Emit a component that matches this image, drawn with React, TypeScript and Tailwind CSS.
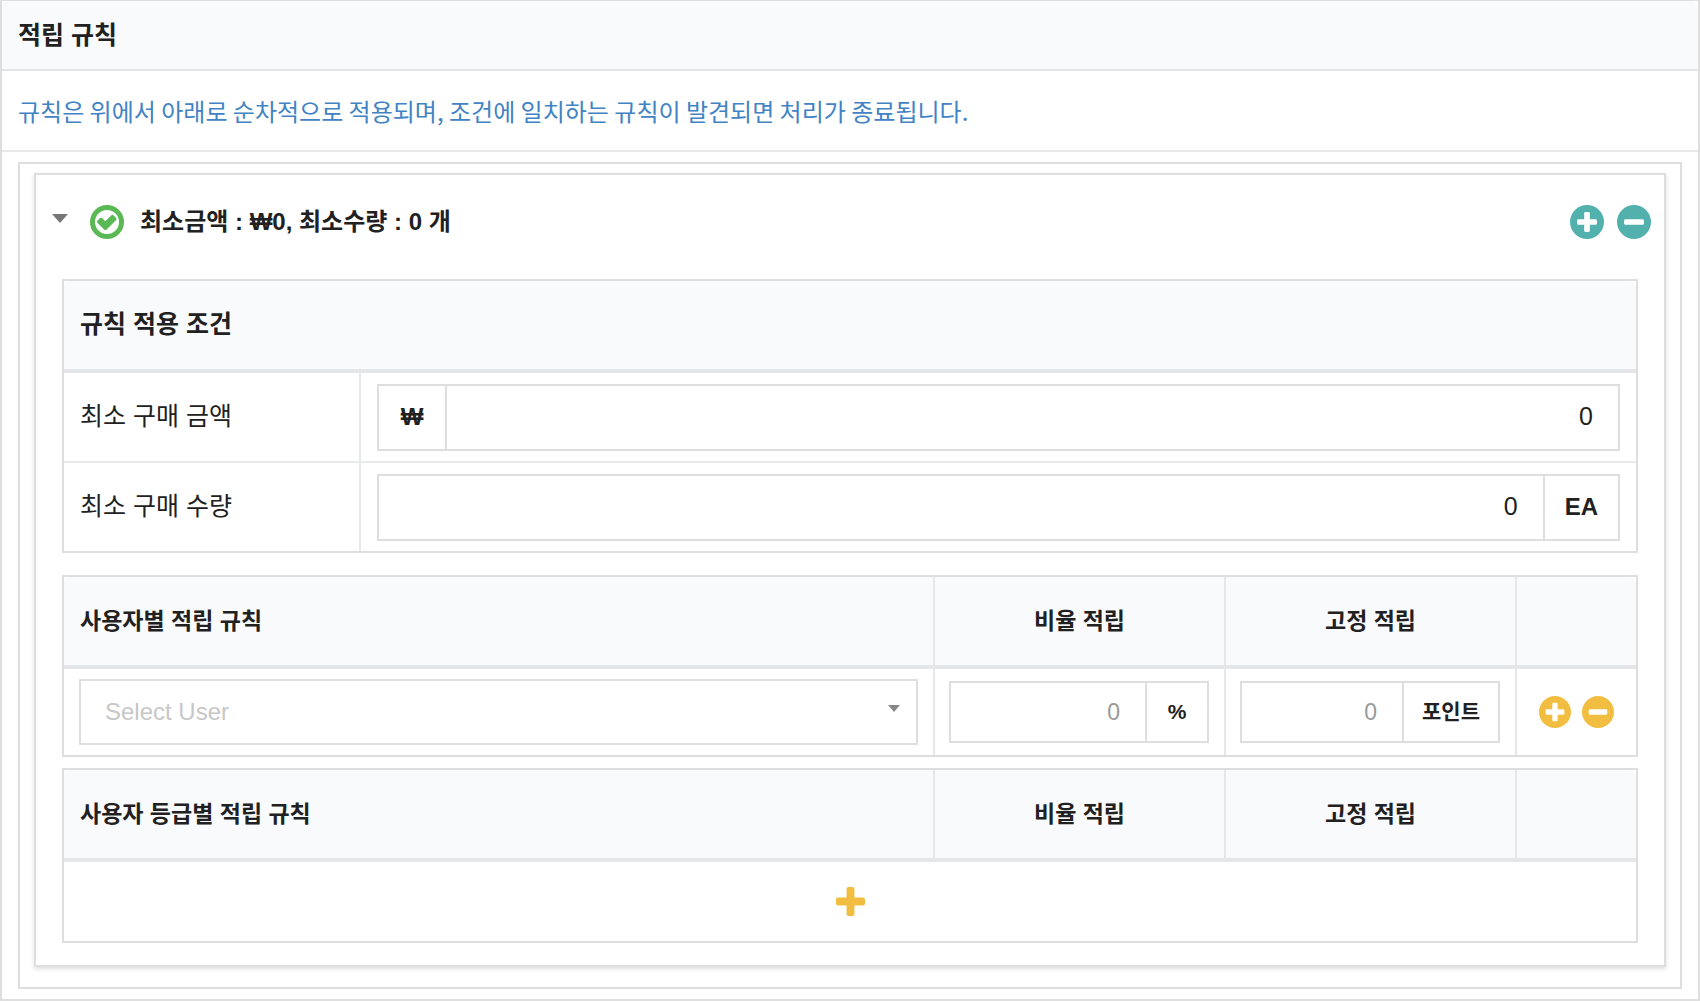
import { useState } from "react";

const frame = "border-2 border-[#dededf]";
const headCell = "bg-[#f9fafb] border-b-4 border-[#e5e6e7] h-[92px] px-4";
const columnLine = "border-l-2 border-l-[#e6e7e8]";

type IconProps = { className?: string };

function PlusCircleIcon({ className = "" }: IconProps) {
  return (
    <svg viewBox="0 0 1536 1536" className={`fill-current ${className}`}>
      <circle cx="768" cy="768" r="768" />
      <rect x="320" y="640" width="896" height="256" rx="64" className="fill-white" />
      <rect x="640" y="320" width="256" height="896" rx="64" className="fill-white" />
    </svg>
  );
}

function MinusCircleIcon({ className = "" }: IconProps) {
  return (
    <svg viewBox="0 0 1536 1536" className={`fill-current ${className}`}>
      <circle cx="768" cy="768" r="768" />
      <rect x="320" y="640" width="896" height="256" rx="64" className="fill-white" />
    </svg>
  );
}

function PlusIcon({ className = "" }: IconProps) {
  return (
    <svg viewBox="0 0 1408 1408" className={`fill-current ${className}`}>
      <rect y="512" width="1408" height="384" rx="96" />
      <rect x="512" width="384" height="1408" rx="96" />
    </svg>
  );
}

function CheckCircleIcon({ className = "" }: IconProps) {
  return (
    <svg viewBox="128 128 1536 1536" className={`fill-current ${className}`}>
      <circle cx="896" cy="896" r="656" fill="none" stroke="currentColor" strokeWidth="224" />
      <path d="M1299 813l-422 422q-24 24-57 24t-57-24l-294-294q-24-24-24-57t24-57l102-102q24-24 57-24t57 24l135 135 263-263q24-24 57-24t57 24l102 102q24 24 24 57t-24 57z" />
    </svg>
  );
}

type UnitInputProps = {
  label: string;
  unit: string;
  unitFirst?: boolean;
  small?: boolean;
  placeholder?: string;
  initial?: string;
};

function UnitInput({ label, unit, unitFirst, small, placeholder, initial = "" }: UnitInputProps) {
  const [value, setValue] = useState(initial);

  return (
    <label className={`flex w-full bg-white ${small ? "h-[62px]" : "h-[67px]"} ${unitFirst ? "flex-row-reverse" : ""}`}>
      <input
        aria-label={label}
        value={value}
        placeholder={placeholder}
        onChange={(e) => setValue(e.target.value)}
        className={`min-w-0 flex-1 border-y-2 border-[#dededf] bg-transparent px-[25px] text-right outline-none placeholder:text-[#999] ${
          small ? "text-[23px]" : "text-[25px]"
        } ${unitFirst ? "border-r-2" : "border-l-2"}`}
      />
      <span
        className={`${frame} flex shrink-0 items-center justify-center font-bold ${
          small ? "min-w-16 px-[18px] text-[21px]" : "min-w-[70px] px-5 text-[24px]"
        }`}
      >
        {unit}
      </span>
    </label>
  );
}

function ColumnWidths() {
  return (
    <colgroup>
      <col />
      <col className="w-[291px]" />
      <col className="w-[291px]" />
      <col className="w-[121px]" />
    </colgroup>
  );
}

function RateHead({ title }: { title: string }) {
  return (
    <thead>
      <tr className="text-[23px]">
        <th className={`${headCell} rounded-tl-lg text-left`}>{title}</th>
        <th className={`${headCell} ${columnLine}`}>비율 적립</th>
        <th className={`${headCell} ${columnLine}`}>고정 적립</th>
        <th className={`${headCell} ${columnLine} rounded-tr-lg`} aria-label="관리" />
      </tr>
    </thead>
  );
}

export default function App() {
  const [open, setOpen] = useState(true);

  return (
    <div className="min-h-screen bg-white font-['Liberation_Sans','Noto_Sans_CJK_KR',sans-serif] text-[#212121]">
      <section className="border-2 border-t border-[#dededf]">
        <h1 className="flex h-[70px] items-center rounded-t-lg border-b-2 border-[#e3e4e5] bg-[#f9fafb] px-4 pt-[2px] text-[25px] font-bold">
          적립 규칙
        </h1>
        <p className="flex h-[81px] items-center border-b-2 border-[#e8e9e9] px-4 font-['Noto_Sans_CJK_KR',sans-serif] text-[24px] text-[#4183c4]">
          규칙은 위에서 아래로 순차적으로 적용되며, 조건에 일치하는 규칙이 발견되면 처리가 종료됩니다.
        </p>

        <div className="px-4 py-[10px]">
          <div className={`${frame} px-[14px] pt-[9px] pb-5`}>
            <div className={`${frame} px-[26px] pb-[22px] shadow-[0_2px_4px_rgba(34,36,38,0.15)]`}>
              {/* Rule summary */}
              <div className="-mr-[13px] -ml-3 flex h-[104px] items-center pb-[10px]">
                <button
                  type="button"
                  aria-label="펼치기"
                  aria-expanded={open}
                  onClick={() => setOpen(!open)}
                  className="flex h-10 w-6 items-center pb-2"
                >
                  <svg viewBox="0 0 16 9" className="ml-[2px] h-[9px] w-4 fill-[#777]">
                    <path d="M0 0h16L8 9z" />
                  </svg>
                </button>
                <CheckCircleIcon className="ml-4 size-[34px] text-[#5bb955]" />
                <h2 className="ml-4 flex-1 text-[24px] font-bold">최소금액 : ₩0, 최소수량 : 0 개</h2>
                <div className="flex gap-[13px] text-[#52b1ad]">
                  <button type="button" aria-label="규칙 추가">
                    <PlusCircleIcon className="size-[34px]" />
                  </button>
                  <button type="button" aria-label="규칙 삭제">
                    <MinusCircleIcon className="size-[34px]" />
                  </button>
                </div>
              </div>

              {open && (
                <>
                  <table className={`${frame} w-full table-fixed border-separate border-spacing-0`}>
                    <colgroup>
                      <col className="w-[295px]" />
                      <col />
                    </colgroup>
                    <thead>
                      <tr>
                        <th colSpan={2} className={`${headCell} rounded-t-lg text-left text-[25px]`}>
                          규칙 적용 조건
                        </th>
                      </tr>
                    </thead>
                    <tbody className="text-[25px]">
                      <tr>
                        <th className="h-[90px] border-b-2 border-[#e8e9e9] px-4 text-left font-normal">최소 구매 금액</th>
                        <td className={`${columnLine} border-b-2 border-b-[#e8e9e9] px-4`}>
                          <UnitInput label="최소 구매 금액" unit="₩" unitFirst initial="0" />
                        </td>
                      </tr>
                      <tr>
                        <th className="h-[88px] px-4 text-left font-normal">최소 구매 수량</th>
                        <td className={`${columnLine} px-4`}>
                          <UnitInput label="최소 구매 수량" unit="EA" initial="0" />
                        </td>
                      </tr>
                    </tbody>
                  </table>

                  <table className={`${frame} mt-[22px] w-full table-fixed border-separate border-spacing-0`}>
                    <ColumnWidths />
                    <RateHead title="사용자별 적립 규칙" />
                    <tbody>
                      <tr>
                        <td className="h-[86px] px-[15px]">
                          <div className="grid items-center">
                            <select
                              aria-label="Select User"
                              defaultValue=""
                              className={`${frame} col-start-1 row-start-1 h-[66px] w-full appearance-none bg-white px-6 text-[24px] text-[#c7c7c7] outline-none`}
                            >
                              <option value="">Select User</option>
                            </select>
                            <svg
                              viewBox="0 0 12 7"
                              className="pointer-events-none col-start-1 row-start-1 mr-[18px] mb-2 h-[7px] w-3 justify-self-end fill-[#888]"
                            >
                              <path d="M0 0h12L6 7z" />
                            </svg>
                          </div>
                        </td>
                        <td className={`${columnLine} pr-[15px] pl-[14px]`}>
                          <UnitInput label="비율 적립" unit="%" small placeholder="0" />
                        </td>
                        <td className={`${columnLine} pr-[15px] pl-[14px]`}>
                          <UnitInput label="고정 적립" unit="포인트" small placeholder="0" />
                        </td>
                        <td className={columnLine}>
                          <div className="flex justify-center gap-[11px] text-[#f2be42]">
                            <button type="button" aria-label="사용자 추가">
                              <PlusCircleIcon className="size-8" />
                            </button>
                            <button type="button" aria-label="사용자 삭제">
                              <MinusCircleIcon className="size-8" />
                            </button>
                          </div>
                        </td>
                      </tr>
                    </tbody>
                  </table>

                  <table className={`${frame} mt-[11px] w-full table-fixed border-separate border-spacing-0`}>
                    <ColumnWidths />
                    <RateHead title="사용자 등급별 적립 규칙" />
                    <tbody>
                      <tr>
                        <td colSpan={4} className="h-[79px]">
                          <button type="button" aria-label="등급 추가" className="mx-auto block text-[#f2be42]">
                            <PlusIcon className="size-[29px]" />
                          </button>
                        </td>
                      </tr>
                    </tbody>
                  </table>
                </>
              )}
            </div>
          </div>
        </div>
      </section>
    </div>
  );
}
